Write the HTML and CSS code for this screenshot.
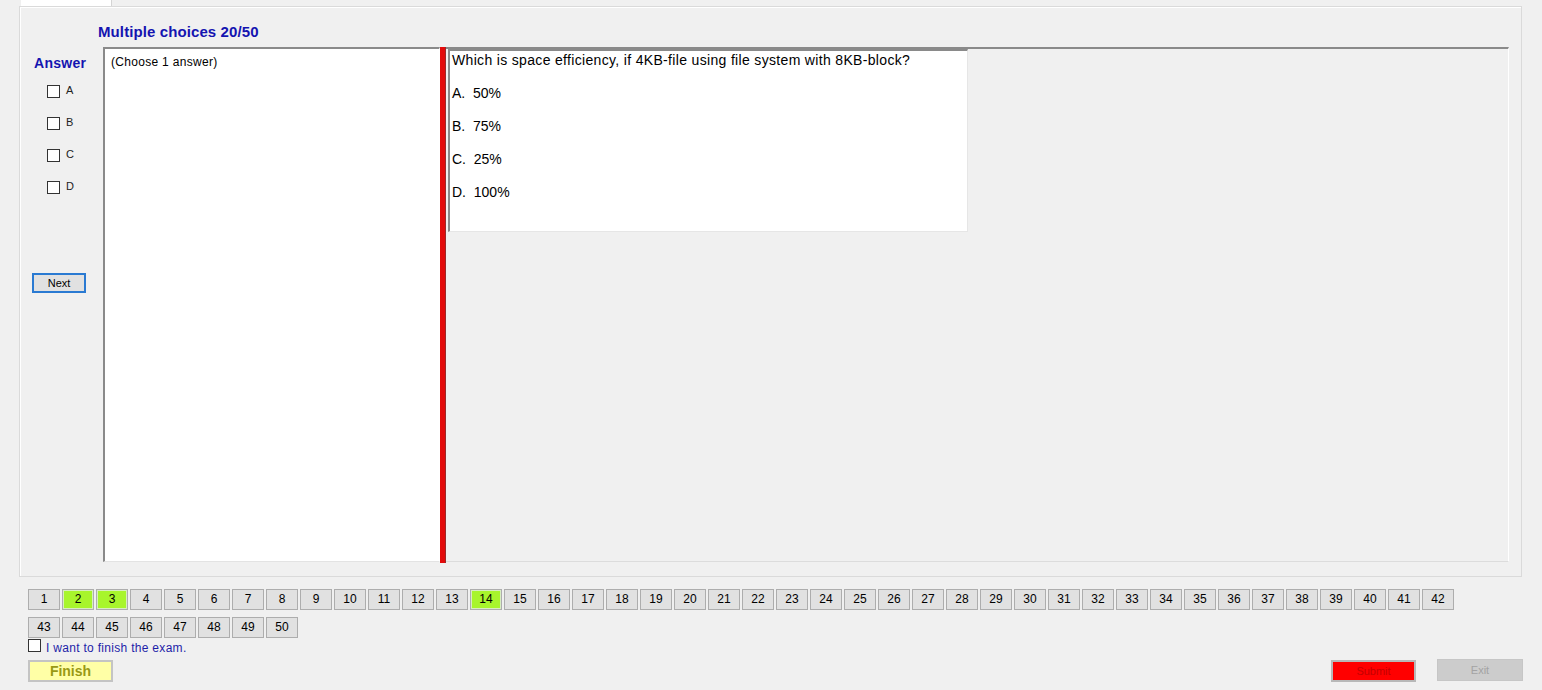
FILE: index.html
```html
<!DOCTYPE html>
<html>
<head>
<meta charset="utf-8">
<link rel="stylesheet" href="styles.css">
</head>
<body>
<div class="tabs"><div class="tab"></div></div>
<div class="panel">
  <div class="title">Multiple choices 20/50</div>
  <div class="main">
    <div class="answers">
      <div class="answer-head">Answer</div>
      <div class="opts">
        <label class="opt"><span class="box"></span><span>A</span></label>
        <label class="opt"><span class="box"></span><span>B</span></label>
        <label class="opt"><span class="box"></span><span>C</span></label>
        <label class="opt"><span class="box"></span><span>D</span></label>
      </div>
      <div class="next">Next</div>
    </div>
    <div class="choose">(Choose 1 answer)</div>
    <div class="splitter"></div>
    <div class="right">
      <div class="qbox">
        <div class="qline qtext">Which is space efficiency, if 4KB-file using file system with 8KB-block?</div>
        <div class="qline">A.&nbsp; 50%</div>
        <div class="qline">B.&nbsp; 75%</div>
        <div class="qline">C.&nbsp; 25%</div>
        <div class="qline">D.&nbsp; 100%</div>
      </div>
    </div>
  </div>
</div>
<div class="nav">
  <span class="qb">1</span><span class="qb done">2</span><span class="qb done">3</span><span class="qb">4</span><span class="qb">5</span><span class="qb">6</span><span class="qb">7</span><span class="qb">8</span><span class="qb">9</span><span class="qb">10</span>
  <span class="qb">11</span><span class="qb">12</span><span class="qb">13</span><span class="qb done">14</span><span class="qb">15</span><span class="qb">16</span><span class="qb">17</span><span class="qb">18</span><span class="qb">19</span><span class="qb">20</span>
  <span class="qb">21</span><span class="qb">22</span><span class="qb">23</span><span class="qb">24</span><span class="qb">25</span><span class="qb">26</span><span class="qb">27</span><span class="qb">28</span><span class="qb">29</span><span class="qb">30</span>
  <span class="qb">31</span><span class="qb">32</span><span class="qb">33</span><span class="qb">34</span><span class="qb">35</span><span class="qb">36</span><span class="qb">37</span><span class="qb">38</span><span class="qb">39</span><span class="qb">40</span>
  <span class="qb">41</span><span class="qb">42</span><span class="qb">43</span><span class="qb">44</span><span class="qb">45</span><span class="qb">46</span><span class="qb">47</span><span class="qb">48</span><span class="qb">49</span><span class="qb">50</span>
</div>
<label class="finish-check"><span class="box"></span><span>I want to finish the exam.</span></label>
<div class="bottom">
  <div class="btn finish">Finish</div>
  <div class="btn submit">Submit</div>
  <div class="btn exit">Exit</div>
</div>
</body>
</html>
```
FILE: styles.css
```css
html, body {
  margin: 0;
  padding: 0;
}
body {
  width: 1542px;
  height: 690px;
  overflow: hidden;
  background: #f0f0f0;
  font-family: "Liberation Sans", Arial, sans-serif;
  color: #000;
}
.tabs {
  height: 6px;
  display: flex;
  padding-left: 21px;
}
.tab {
  width: 90px;
  background: #fff;
  border-right: 1px solid #d4d4d4;
}
.panel {
  box-sizing: border-box;
  margin-left: 19px;
  width: 1503px;
  height: 571px;
  border: 1px solid #dadada;
  box-shadow: inset 1px 1px 0 #fff;
  padding-right: 12px;
  display: flex;
  flex-direction: column;
}
.title {
  height: 40px;
  box-sizing: border-box;
  padding-top: 17px;
  padding-left: 78px;
  font-size: 15px;
  line-height: 16px;
  font-weight: bold;
  color: #1414b0;
  letter-spacing: 0.1px;
}
.main {
  display: flex;
  height: 515px;
}
.answers {
  width: 83px;
  flex: none;
}
.answer-head {
  margin-top: 8px;
  padding-left: 14px;
  font-size: 14px;
  line-height: 16px;
  font-weight: bold;
  color: #1414b0;
  letter-spacing: 0.3px;
}
.opts {
  margin-top: 5px;
  padding-left: 27px;
}
.opt {
  display: flex;
  align-items: center;
  height: 32px;
  font-size: 11px;
  color: #222;
}
.box {
  box-sizing: border-box;
  width: 13px;
  height: 13px;
  border: 1px solid #333;
  background: #fff;
  flex: none;
}
.opt .box {
  margin-right: 6px;
  margin-top: -1px;
}
.opt span:last-child {
  margin-top: -5px;
}
.next {
  box-sizing: border-box;
  margin-top: 69px;
  margin-left: 12px;
  width: 54px;
  height: 20px;
  border: 2px solid #2a7ad2;
  background: #e1e1e1;
  font-size: 11px;
  line-height: 16px;
  text-align: center;
}
.choose {
  box-sizing: border-box;
  width: 337px;
  flex: none;
  background: #fff;
  border-top: 2px solid #8a8a8a;
  border-left: 2px solid #8a8a8a;
  border-right: 1px solid #fff;
  border-bottom: 1px solid #e3e3e3;
  padding: 6px 0 0 6px;
  font-size: 12px;
  line-height: 14px;
  letter-spacing: 0.3px;
}
.splitter {
  box-sizing: border-box;
  width: 6px;
  flex: none;
  background: #e30b0b;
  border-right: 1px solid #9a2a2a;
  height: 516px;
}
.right {
  flex: 1;
  box-sizing: border-box;
  border-top: 2px solid #8a8a8a;
  border-right: 1px solid #fff;
  border-bottom: 1px solid #dcdcdc;
  padding-left: 2px;
}
.qbox {
  box-sizing: border-box;
  width: 520px;
  height: 183px;
  background: #fff;
  border-top: 2px solid #8a8a8a;
  border-left: 2px solid #8a8a8a;
  border-right: 1px solid #e6e6e6;
  border-bottom: 1px solid #e6e6e6;
  padding: 1px 0 0 2px;
}
.qline {
  height: 33px;
  font-size: 14px;
  line-height: 16px;
}
.qtext {
  letter-spacing: 0.33px;
}
.nav {
  display: flex;
  flex-wrap: wrap;
  column-gap: 2px;
  row-gap: 7px;
  width: 1428px;
  margin: 12px 0 0 28px;
}
.qb {
  box-sizing: border-box;
  width: 32px;
  height: 21px;
  border: 1px solid #adadad;
  background: #e1e1e1;
  font-size: 12px;
  line-height: 19px;
  text-align: center;
}
.qb.done {
  background: #a8f52c;
  box-shadow: inset 0 0 0 1px #d8eec0;
}
.finish-check {
  display: flex;
  align-items: center;
  height: 17px;
  margin-top: 1px;
  padding-left: 28px;
  font-size: 12px;
  color: #1e1ea8;
  letter-spacing: 0.3px;
}
.finish-check .box {
  margin-right: 5px;
  margin-top: -4px;
}
.bottom {
  display: flex;
  align-items: flex-start;
  margin-top: 4px;
  padding: 0 19px 0 28px;
}
.btn {
  box-sizing: border-box;
  text-align: center;
}
.finish {
  width: 85px;
  height: 22px;
  background: #ffffa6;
  border: 2px solid #c4c4c4;
  font-size: 14px;
  line-height: 18px;
  font-weight: bold;
  color: #999915;
}
.submit {
  margin-left: auto;
  width: 85px;
  height: 22px;
  background: #ff0000;
  border: 2px solid #b8b8b8;
  font-size: 11px;
  line-height: 18px;
  color: #c40000;
}
.exit {
  margin-left: 21px;
  margin-top: -1px;
  width: 86px;
  height: 22px;
  background: #cccccc;
  border: 1px solid #c6c6c6;
  font-size: 11px;
  line-height: 20px;
  color: #a3a3a3;
}
```
